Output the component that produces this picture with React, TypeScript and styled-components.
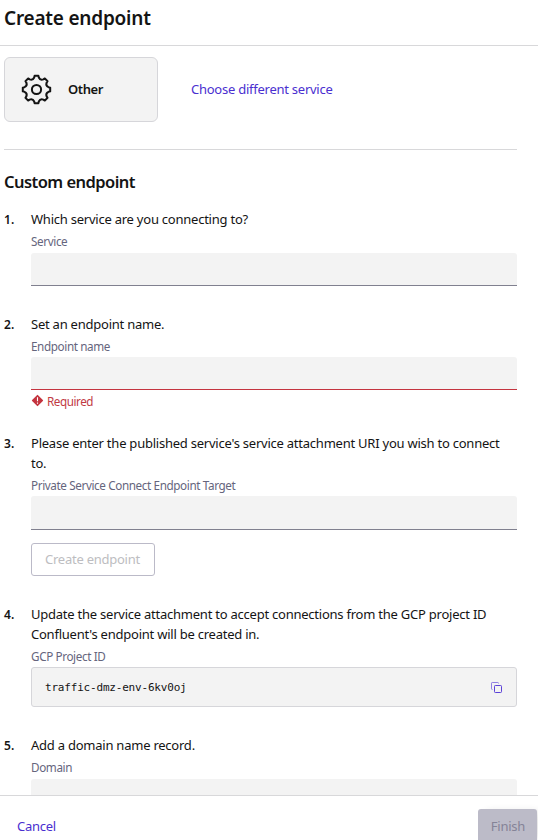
import React from "react";
import styled, { createGlobalStyle } from "styled-components";

const GlobalStyle = createGlobalStyle`
  *, *::before, *::after { box-sizing: border-box; }
  body {
    margin: 0;
    background: #fff;
    color: #141414;
    font-family: "Noto Sans", "Open Sans", sans-serif;
    font-size: 13px;
    line-height: 20px;
  }
`;

const Panel = styled.div`
  display: flex;
  flex-direction: column;
  height: 840px;
  overflow: hidden;
`;

const Header = styled.header`
  flex: none;
  height: 46px;
  padding: 5px 4px 0;
  border-bottom: 1px solid #d8d8da;
`;

const Title = styled.h1`
  margin: 0;
  font-size: 19px;
  line-height: 26px;
  font-weight: 600;
  letter-spacing: -0.22px;
`;

const Content = styled.main`
  flex: 1;
  min-height: 0;
  overflow: hidden;
  padding: 11px 21px 0 4px;
`;

const ServiceRow = styled.div`
  display: flex;
  align-items: center;
  gap: 33px;
  padding-bottom: 27px;
  border-bottom: 1px solid #d8d8da;
`;

const ServiceCard = styled.div`
  display: flex;
  align-items: center;
  gap: 16px;
  width: 154px;
  height: 65px;
  padding: 0 0 1px 16px;
  background: #f3f3f3;
  border: 1px solid #d6d6da;
  border-radius: 6px;
  font-weight: 600;
  letter-spacing: -0.4px;
`;

const LinkButton = styled.button<{ $lift?: number }>`
  padding: 0 0 ${(p) => p.$lift ?? 0}px;
  border: 0;
  background: none;
  color: #4a2fd0;
  font: inherit;
  letter-spacing: -0.25px;
`;

const SectionTitle = styled.h2`
  margin: 20px 0 15px;
  font-size: 16.5px;
  line-height: 24px;
  font-weight: 600;
  letter-spacing: -0.54px;
`;

const Steps = styled.ol`
  list-style: none;
  margin: 0;
  padding: 0;
`;

const StepItem = styled.li<{ $gap: number }>`
  display: grid;
  grid-template-columns: 27px minmax(0, 1fr);
  margin-bottom: ${(p) => p.$gap}px;
`;

const StepNumber = styled.span`
  padding-top: 1px;
  font-size: 12px;
  font-weight: 600;
`;

const Question = styled.p`
  margin: 0;
  white-space: nowrap;
  letter-spacing: -0.235px;
`;

const Label = styled.label<{ $height?: number }>`
  display: block;
  height: ${(p) => p.$height ?? 23}px;
  padding-top: 2px;
  color: #65657d;
  font-size: 11.7px;
  letter-spacing: -0.38px;
`;

const Field = styled.input<{ $invalid?: boolean; $height?: number }>`
  display: block;
  width: 100%;
  height: ${(p) => p.$height ?? 33}px;
  padding: 0 14px;
  border: 0;
  border-bottom: 1px solid ${(p) => (p.$invalid ? "#c4343f" : "#80808f")};
  border-radius: 3px 3px 0 0;
  background: #f3f3f3;
  font: inherit;
  outline: 0;
`;

const ErrorMessage = styled.div`
  display: flex;
  align-items: center;
  gap: 3px;
  height: 21px;
  color: #c13a44;
  font-size: 11.7px;
  letter-spacing: -0.45px;
`;

const OutlineButton = styled.button`
  width: 124px;
  height: 33px;
  margin-top: 13px;
  padding: 0 1px 2px 0;
  border: 1px solid #bbbac8;
  border-radius: 3px;
  background: #fff;
  color: #bdbdc1;
  font: inherit;
  letter-spacing: -0.25px;
`;

const CodeBox = styled.div`
  display: flex;
  align-items: center;
  justify-content: space-between;
  height: 40px;
  padding: 0 13px;
  border: 1px solid #d6d6da;
  border-radius: 3px;
  background: #f3f3f3;
`;

const Code = styled.code`
  padding-top: 1px;
  font-family: "DejaVu Sans Mono", monospace;
  font-size: 11px;
  letter-spacing: -0.19px;
`;

const Footer = styled.footer`
  flex: none;
  display: flex;
  justify-content: space-between;
  align-items: flex-start;
  height: 45px;
  padding: 13px 1px 0 17px;
  border-top: 1px solid #d8d8da;
`;

const CancelSlot = styled.div`
  padding-top: 7px;
`;

const FinishButton = styled.button`
  width: 59px;
  height: 33px;
  padding: 0 0 0 1px;
  border: 0;
  border-radius: 3px;
  background: #bcbbc8;
  color: #858397;
  font: inherit;
  letter-spacing: -0.25px;
  box-shadow: 5px 0 8px -3px rgba(0, 0, 0, 0.14);
`;

/* Eight blunt teeth separated by rounded notches. */
function gearOutline(cx: number, cy: number): string {
  const at = (deg: number, out: number, side: number) => {
    const a = (deg * Math.PI) / 180;
    const x = cx + out * Math.sin(a) + side * Math.cos(a);
    const y = cy - out * Math.cos(a) + side * Math.sin(a);
    return `${x.toFixed(2)} ${y.toFixed(2)}`;
  };
  let d = `M${at(0, 13.7, -1.9)}`;
  for (let i = 0; i < 8; i++) {
    const t = i * 45;
    d += `L${at(t, 13.7, 1.9)}L${at(t, 12, 2.3)}`;
    d += `C${at(t, 9.8, 3.3)} ${at(t + 45, 9.8, -3.3)} ${at(t + 45, 12, -2.3)}`;
    d += `L${at(t + 45, 13.7, -1.9)}`;
  }
  return d + "Z";
}

const GearIcon = () => (
  <svg width="31" height="31" viewBox="0 0 31 31" fill="none" stroke="#141414" strokeWidth="2" strokeLinejoin="round">
    <path d={gearOutline(15.5, 15.5)} />
    <circle cx="15.5" cy="15.5" r="4.6" />
  </svg>
);

const AlertIcon = () => (
  <svg width="13" height="13" viewBox="0 0 13 13">
    <rect x="2.3" y="2.3" width="8.4" height="8.4" rx="0.8" fill="#c4343f" transform="rotate(45 6.5 6.5)" />
    <path d="M6.5 3.2V7.2M6.5 8.5V9.7" stroke="#fff" strokeWidth="1.1" />
  </svg>
);

const CopyIcon = () => (
  <svg width="13" height="13" viewBox="0 0 13 13" fill="none" stroke="#5b41d8">
    <rect x="4.5" y="4.5" width="7" height="7" rx="0.8" />
    <path d="M2.5 8.5H2.3A.8.8 0 0 1 1.5 7.7V2.3A.8.8 0 0 1 2.3 1.5H7.7A.8.8 0 0 1 8.5 2.3V2.5" opacity=".65" />
  </svg>
);

interface StepProps {
  n: number;
  gap: number;
  children: React.ReactNode;
}

const Step = ({ n, gap, children }: StepProps) => (
  <StepItem $gap={gap}>
    <StepNumber>{n}.</StepNumber>
    <div>{children}</div>
  </StepItem>
);

export default function App() {
  return (
    <Panel>
      <GlobalStyle />
      <Header>
        <Title>Create endpoint</Title>
      </Header>
      <Content>
        <ServiceRow>
          <ServiceCard>
            <GearIcon />
            <span>Other</span>
          </ServiceCard>
          <LinkButton $lift={2}>Choose different service</LinkButton>
        </ServiceRow>
        <SectionTitle>Custom endpoint</SectionTitle>
        <Steps>
          <Step n={1} gap={28}>
            <Question>Which service are you connecting to?</Question>
            <Label $height={24}>Service</Label>
            <Field />
          </Step>
          <Step n={2} gap={22}>
            <Question>Set an endpoint name.</Question>
            <Label>Endpoint name</Label>
            <Field $invalid />
            <ErrorMessage>
              <AlertIcon />
              <span>Required</span>
            </ErrorMessage>
          </Step>
          <Step n={3} gap={28}>
            <Question>
              Please enter the published service's service attachment URI you wish to connect
              <br />
              to.
            </Question>
            <Label>Private Service Connect Endpoint Target</Label>
            <Field $height={34} />
            <OutlineButton disabled>Create endpoint</OutlineButton>
          </Step>
          <Step n={4} gap={28}>
            <Question>
              Update the service attachment to accept connections from the GCP project ID
              <br />
              Confluent's endpoint will be created in.
            </Question>
            <Label>GCP Project ID</Label>
            <CodeBox>
              <Code>traffic-dmz-env-6kv0oj</Code>
              <CopyIcon />
            </CodeBox>
          </Step>
          <Step n={5} gap={0}>
            <Question>Add a domain name record.</Question>
            <Label $height={24}>Domain</Label>
            <Field />
          </Step>
        </Steps>
      </Content>
      <Footer>
        <CancelSlot>
          <LinkButton>Cancel</LinkButton>
        </CancelSlot>
        <FinishButton disabled>Finish</FinishButton>
      </Footer>
    </Panel>
  );
}
